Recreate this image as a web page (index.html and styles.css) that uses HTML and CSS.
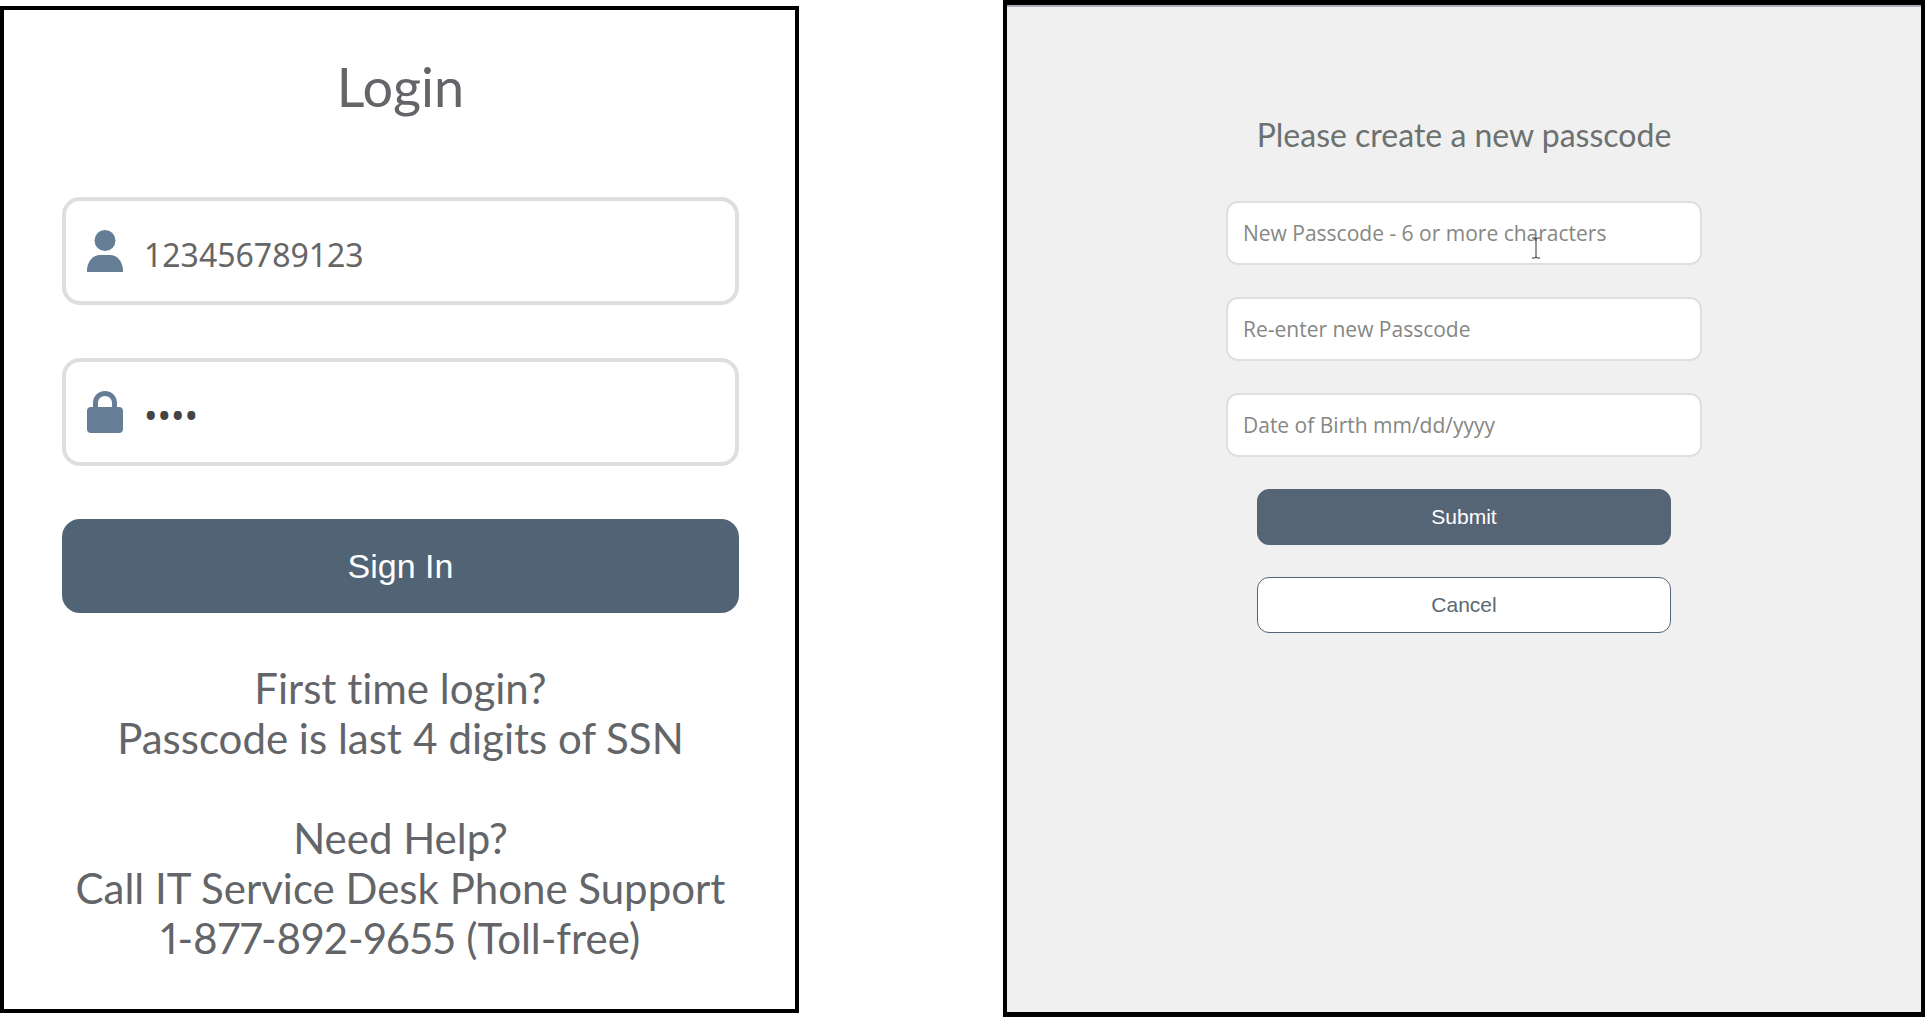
FILE: index.html
```
<!DOCTYPE html>
<html lang="en">
<head>
    <meta charset="UTF-8">
    <meta name="viewport" content="width=device-width, initial-scale=1.0">
    <title>Login</title>
    <link rel="stylesheet" href="styles.css">
</head>
<body>
    <main class="screens">
        <section class="panel login-panel">
            <h1 class="login-title">Login</h1>
            <form class="login-form">
                <div class="input-box">
                    <label for="username" aria-label="User ID">
                        <svg class="icon" viewBox="0 0 36 42" aria-hidden="true">
                            <circle cx="18" cy="10.5" r="10.5"/>
                            <path d="M0 42V39C1 31 6 25 13 25H23C30 25 35 31 36 39V42Z"/>
                        </svg>
                    </label>
                    <input type="text" id="username" value="123456789123">
                </div>
                <div class="input-box">
                    <label for="passcode" aria-label="Passcode">
                        <svg class="icon" viewBox="0 0 36 42" aria-hidden="true">
                            <path fill-rule="evenodd" d="M6 16V12C6 5 11 0 18 0S30 5 30 12V16H32Q36 16 36 20V38Q36 42 32 42H4Q0 42 0 38V20Q0 16 4 16ZM11 16H25V12C25 8 22 5 18 5S11 8 11 12Z"/>
                        </svg>
                    </label>
                    <input type="password" id="passcode" value="1234">
                </div>
                <button type="button" class="sign-in">Sign In</button>
            </form>
            <p class="help">First time login?<br>Passcode is last 4 digits of SSN</p>
            <p class="help">Need Help?<br>Call IT Service Desk Phone Support<br>1-877-892-9655 (Toll-free)</p>
        </section>

        <section class="panel passcode-panel">
            <h2 class="passcode-title">Please create a new passcode</h2>
            <form class="passcode-form">
                <div class="field">
                    <input type="text" aria-label="New Passcode" placeholder="New Passcode - 6 or more characters">
                    <svg class="cursor" viewBox="0 0 10 22" aria-hidden="true">
                        <path d="M1 1H4L5 2L6 1H9M5 2V20M1 21H4L5 20L6 21H9"/>
                    </svg>
                </div>
                <div class="field">
                    <input type="text" aria-label="Re-enter new Passcode" placeholder="Re-enter new Passcode">
                </div>
                <div class="field">
                    <input type="text" aria-label="Date of Birth" placeholder="Date of Birth mm/dd/yyyy">
                </div>
                <button type="button" class="submit">Submit</button>
                <button type="button" class="cancel">Cancel</button>
            </form>
        </section>
    </main>
</body>
</html>
```
FILE: styles.css
```
* {
    box-sizing: border-box;
}

body {
    margin: 0;
    background-color: #ffffff;
}

h1,
h2,
p {
    margin: 0;
    font-weight: normal;
    text-align: center;
}

.screens {
    display: flex;
    justify-content: space-between;
    min-height: 100vh;
}

.panel {
    border: 4px solid #000;
}

.login-panel {
    width: 41.5%;
    margin: 6px 0 4px;
    padding: 45px 56px 0 58px;
    color: #636569;
    font-family: Lato, sans-serif;
    font-variant-ligatures: none;
    font-variant-numeric: proportional-nums;
}

.login-title {
    font-size: 54px;
    line-height: 64px;
}

.login-form {
    display: flex;
    flex-direction: column;
    gap: 53px;
    margin: 78px 0 50px;
}

.input-box {
    display: flex;
    align-items: center;
    height: 108px;
    padding: 0 21px;
    border: 4px solid #dedede;
    border-radius: 18px;
}

.icon {
    display: block;
    width: 36px;
    height: 42px;
    fill: #657e95;
}

.input-box input {
    flex: 1;
    min-width: 0;
    padding: 6px 0 0 21px;
    border: 0;
    outline: 0;
    background: none;
    color: #666;
    font-family: "Noto Sans", sans-serif;
    font-size: 32px;
}

.input-box input[type="password"] {
    color: #444;
    font-size: 36px;
}

button {
    border-radius: 12px;
    font-family: "Liberation Sans", Arial, sans-serif;
}

.sign-in {
    height: 94px;
    border: 0;
    border-radius: 18px;
    background-color: #506475;
    color: #fff;
    font-size: 34px;
}

.help {
    margin: 0 -20px;
    font-size: 42px;
    line-height: 50px;
}

.help + .help {
    margin-top: 50px;
}

.passcode-panel {
    width: 47.9%;
    padding: 110px 24px 0;
    border-width: 5px 4px;
    background-color: #f0f0f0;
    box-shadow: inset 0 2px #aab0b6;
}

.passcode-title {
    color: #6c716f;
    font-family: Lato, sans-serif;
    font-size: 32px;
    line-height: 40px;
}

.passcode-form {
    display: flex;
    flex-direction: column;
    align-items: center;
    gap: 32px;
    max-width: 476px;
    margin: 46px auto 0;
}

.field {
    position: relative;
    width: 100%;
}

.field input {
    display: block;
    width: 100%;
    height: 64px;
    padding: 0 15px;
    border: 2px solid #dfdfdf;
    border-radius: 12px;
    outline: 0;
    background-color: #fff;
    font-family: "Open Sans", sans-serif;
    font-size: 21px;
}

.field input::placeholder {
    color: #858783;
}

/* text pointer resting over the first field */
.cursor {
    position: absolute;
    top: 36px;
    left: 305px;
    width: 10px;
    height: 22px;
    fill: none;
    stroke: #333;
    stroke-width: 1;
}

.submit,
.cancel {
    width: 414px;
    max-width: 100%;
    height: 56px;
    border: 1px solid #566576;
    font-size: 21px;
}

.submit {
    background-color: #566576;
    color: #fff;
}

.cancel {
    background-color: #fff;
    color: #5c6875;
}
```
